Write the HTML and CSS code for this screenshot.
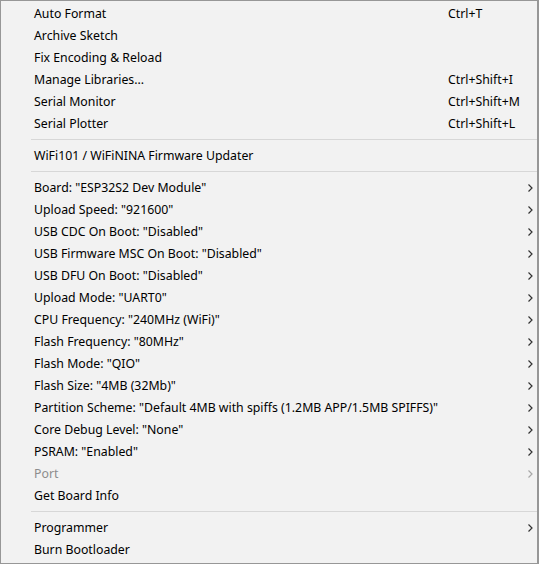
FILE: index.html
```html
<!DOCTYPE html>
<html>
<head>
<meta charset="utf-8">
<link rel="stylesheet" href="styles.css">
</head>
<body>
<div class="menu">
  <div class="item"><span class="label">Auto Format</span><span class="key">Ctrl+T</span><span class="sub"></span></div>
  <div class="item"><span class="label">Archive Sketch</span><span class="key"></span><span class="sub"></span></div>
  <div class="item"><span class="label">Fix Encoding &amp; Reload</span><span class="key"></span><span class="sub"></span></div>
  <div class="item"><span class="label">Manage Libraries...</span><span class="key">Ctrl+Shift+I</span><span class="sub"></span></div>
  <div class="item"><span class="label">Serial Monitor</span><span class="key">Ctrl+Shift+M</span><span class="sub"></span></div>
  <div class="item"><span class="label">Serial Plotter</span><span class="key">Ctrl+Shift+L</span><span class="sub"></span></div>
  <div class="sep"></div>
  <div class="item"><span class="label">WiFi101 / WiFiNINA Firmware Updater</span><span class="key"></span><span class="sub"></span></div>
  <div class="sep"></div>
  <div class="item"><span class="label">Board: "ESP32S2 Dev Module"</span><span class="key"></span><span class="sub"><svg class="arrow" width="5" height="8" viewBox="0 0 5 8"><path d="M0.5 0.5 L4 4 L0.5 7.5" fill="none" stroke="currentColor" stroke-width="1.2"/></svg></span></div>
  <div class="item"><span class="label">Upload Speed: "921600"</span><span class="key"></span><span class="sub"><svg class="arrow" width="5" height="8" viewBox="0 0 5 8"><path d="M0.5 0.5 L4 4 L0.5 7.5" fill="none" stroke="currentColor" stroke-width="1.2"/></svg></span></div>
  <div class="item"><span class="label">USB CDC On Boot: "Disabled"</span><span class="key"></span><span class="sub"><svg class="arrow" width="5" height="8" viewBox="0 0 5 8"><path d="M0.5 0.5 L4 4 L0.5 7.5" fill="none" stroke="currentColor" stroke-width="1.2"/></svg></span></div>
  <div class="item"><span class="label">USB Firmware MSC On Boot: "Disabled"</span><span class="key"></span><span class="sub"><svg class="arrow" width="5" height="8" viewBox="0 0 5 8"><path d="M0.5 0.5 L4 4 L0.5 7.5" fill="none" stroke="currentColor" stroke-width="1.2"/></svg></span></div>
  <div class="item"><span class="label">USB DFU On Boot: "Disabled"</span><span class="key"></span><span class="sub"><svg class="arrow" width="5" height="8" viewBox="0 0 5 8"><path d="M0.5 0.5 L4 4 L0.5 7.5" fill="none" stroke="currentColor" stroke-width="1.2"/></svg></span></div>
  <div class="item"><span class="label">Upload Mode: "UART0"</span><span class="key"></span><span class="sub"><svg class="arrow" width="5" height="8" viewBox="0 0 5 8"><path d="M0.5 0.5 L4 4 L0.5 7.5" fill="none" stroke="currentColor" stroke-width="1.2"/></svg></span></div>
  <div class="item"><span class="label">CPU Frequency: "240MHz (WiFi)"</span><span class="key"></span><span class="sub"><svg class="arrow" width="5" height="8" viewBox="0 0 5 8"><path d="M0.5 0.5 L4 4 L0.5 7.5" fill="none" stroke="currentColor" stroke-width="1.2"/></svg></span></div>
  <div class="item"><span class="label">Flash Frequency: "80MHz"</span><span class="key"></span><span class="sub"><svg class="arrow" width="5" height="8" viewBox="0 0 5 8"><path d="M0.5 0.5 L4 4 L0.5 7.5" fill="none" stroke="currentColor" stroke-width="1.2"/></svg></span></div>
  <div class="item"><span class="label">Flash Mode: "QIO"</span><span class="key"></span><span class="sub"><svg class="arrow" width="5" height="8" viewBox="0 0 5 8"><path d="M0.5 0.5 L4 4 L0.5 7.5" fill="none" stroke="currentColor" stroke-width="1.2"/></svg></span></div>
  <div class="item"><span class="label">Flash Size: "4MB (32Mb)"</span><span class="key"></span><span class="sub"><svg class="arrow" width="5" height="8" viewBox="0 0 5 8"><path d="M0.5 0.5 L4 4 L0.5 7.5" fill="none" stroke="currentColor" stroke-width="1.2"/></svg></span></div>
  <div class="item"><span class="label">Partition Scheme: "Default 4MB with spiffs (1.2MB APP/1.5MB SPIFFS)"</span><span class="key"></span><span class="sub"><svg class="arrow" width="5" height="8" viewBox="0 0 5 8"><path d="M0.5 0.5 L4 4 L0.5 7.5" fill="none" stroke="currentColor" stroke-width="1.2"/></svg></span></div>
  <div class="item"><span class="label">Core Debug Level: "None"</span><span class="key"></span><span class="sub"><svg class="arrow" width="5" height="8" viewBox="0 0 5 8"><path d="M0.5 0.5 L4 4 L0.5 7.5" fill="none" stroke="currentColor" stroke-width="1.2"/></svg></span></div>
  <div class="item"><span class="label">PSRAM: "Enabled"</span><span class="key"></span><span class="sub"><svg class="arrow" width="5" height="8" viewBox="0 0 5 8"><path d="M0.5 0.5 L4 4 L0.5 7.5" fill="none" stroke="currentColor" stroke-width="1.2"/></svg></span></div>
  <div class="item disabled"><span class="label">Port</span><span class="key"></span><span class="sub"><svg class="arrow" width="5" height="8" viewBox="0 0 5 8"><path d="M0.5 0.5 L4 4 L0.5 7.5" fill="none" stroke="currentColor" stroke-width="1.2"/></svg></span></div>
  <div class="item"><span class="label">Get Board Info</span><span class="key"></span><span class="sub"></span></div>
  <div class="sep"></div>
  <div class="item"><span class="label">Programmer</span><span class="key"></span><span class="sub"><svg class="arrow" width="5" height="8" viewBox="0 0 5 8"><path d="M0.5 0.5 L4 4 L0.5 7.5" fill="none" stroke="currentColor" stroke-width="1.2"/></svg></span></div>
  <div class="item"><span class="label">Burn Bootloader</span><span class="key"></span><span class="sub"></span></div>
</div>
</body>
</html>
```
FILE: styles.css
```css
html, body {
  margin: 0;
  padding: 0;
  background: #f0f0f0;
}
.menu {
  box-sizing: border-box;
  width: 539px;
  height: 564px;
  background: #f2f2f2;
  border-top: 1px solid #979797;
  border-left: 1px solid #979797;
  border-right: 2px solid #979797;
  border-bottom: 1px solid #979797;
  padding-top: 1px;
  font-family: "Noto Sans", "Liberation Sans", sans-serif;
  font-size: 12.3px;
  color: #000;
}
.item {
  box-sizing: border-box;
  display: grid;
  grid-template-columns: 1fr 72px 17px;
  align-items: center;
  height: 22px;
  padding-top: 2px;
  padding-left: 33px;
  white-space: nowrap;
}
.label,
.key {
  line-height: 20px;
}
.sub {
  display: flex;
  align-items: center;
  justify-content: flex-start;
  padding-left: 8px;
  color: #333;
}
.arrow {
  display: block;
}
.disabled {
  color: #8d8d8d;
}
.disabled .sub {
  color: #a8a8a8;
}
.sep {
  height: 1px;
  margin: 5px 0 4px 30px;
  background: #d7d7d7;
}
```
